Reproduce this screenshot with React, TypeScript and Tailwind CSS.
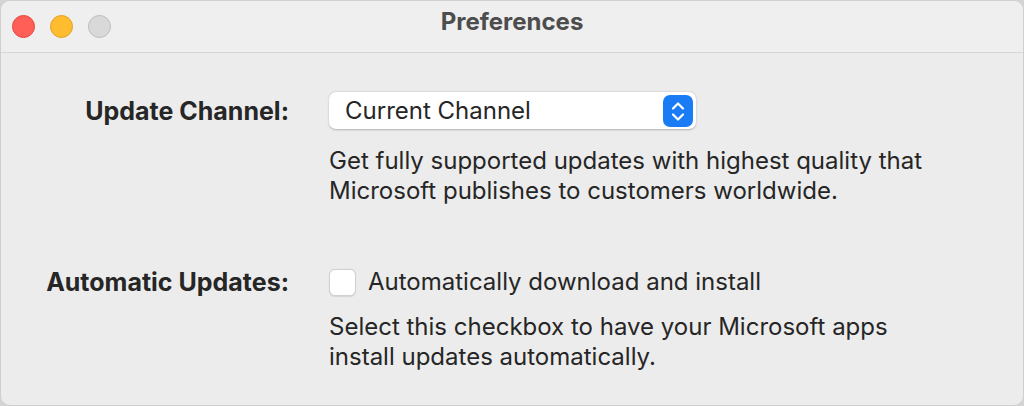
import React from 'react'

function Stepper() {
  return (
    <div className="flex h-[32px] w-[30px] items-center justify-center rounded-[7px] bg-[#1a7cf5]">
      <svg width="14" height="32" viewBox="0 0 14 32" fill="none">
        <path d="M2 13.5 L7 8.5 L12 13.5" stroke="white" strokeWidth="2.2" strokeLinecap="round" strokeLinejoin="round" />
        <path d="M2 19.5 L7 24.5 L12 19.5" stroke="white" strokeWidth="2.2" strokeLinecap="round" strokeLinejoin="round" />
      </svg>
    </div>
  )
}

export default function App() {
  return (
    <div className="h-[406px] w-[1024px] overflow-hidden bg-[#d4d4d4] font-['Inter',sans-serif]">
      <div className="h-full w-full overflow-hidden rounded-[10px] border border-[#cfcfcf] bg-[#ececec]">
        {/* title bar */}
        <div className="relative flex h-[52px] items-center border-b border-[#d6d6d6] bg-[#efefef]">
          <div className="flex gap-[15px] pl-[11px]">
            <div className="h-[23px] w-[23px] rounded-full border border-[#e2463f] bg-[#ff5f57]" />
            <div className="h-[23px] w-[23px] rounded-full border border-[#e1a123] bg-[#febc2e]" />
            <div className="h-[23px] w-[23px] rounded-full border border-[#bcbcbc] bg-[#d9d9d9]" />
          </div>
          <div className="absolute inset-0 flex items-center justify-center pb-[10px] text-[24px] font-bold text-[#4d4d4d]">
            Preferences
          </div>
        </div>

        {/* content */}
        <div className="grid grid-cols-[288px_1fr] gap-x-[40px] pt-[39px] text-[24px] leading-[30px] text-[#262626]">
          <div className="flex h-[37px] items-center justify-end text-[25px] font-bold">Update Channel:</div>
          <div>
            <div className="flex h-[37px] w-[367px] items-center justify-between rounded-[7px] bg-white pl-[16px] pr-[3px] shadow-[0_0.5px_2px_rgba(0,0,0,0.25)]">
              <span>Current Channel</span>
              <Stepper />
            </div>
            <p className="mt-[17px]">
              Get fully supported updates with highest quality that
              <br />
              Microsoft publishes to customers worldwide.
            </p>
          </div>

          <div className="mt-[62px] flex h-[28px] items-center justify-end text-[25px] font-bold">Automatic Updates:</div>
          <div className="mt-[62px]">
            <label className="flex h-[28px] items-center gap-[12px]">
              <span className="h-[27px] w-[27px] rounded-[6px] border border-[#d0d0d0] bg-white shadow-[0_0.5px_1px_rgba(0,0,0,0.1)]" />
              <span>Automatically download and install</span>
            </label>
            <p className="mt-[16px]">
              Select this checkbox to have your Microsoft apps
              <br />
              install updates automatically.
            </p>
          </div>
        </div>
      </div>
    </div>
  )
}
